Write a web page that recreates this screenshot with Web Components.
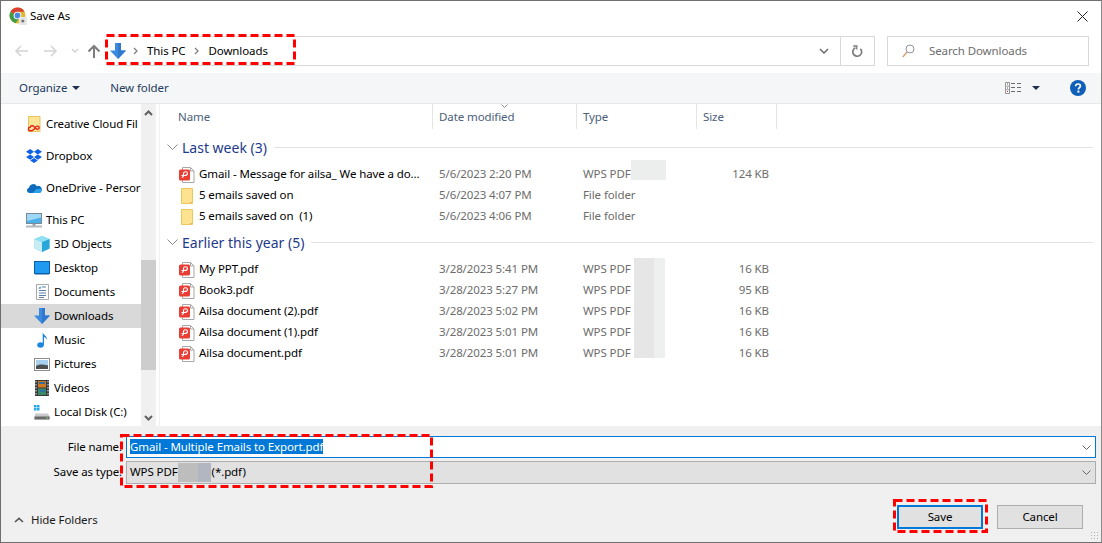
<!DOCTYPE html>
<html>
<head>
<meta charset="utf-8">
<title>Save As</title>
<style>
  html, body { margin: 0; padding: 0; background: #fff; }
  body { font-family: "Noto Sans", "Open Sans", sans-serif; font-size: 11.5px; letter-spacing: -0.1px; color: #000; }
</style>
</head>
<body>
<save-dialog></save-dialog>

<script>
const ICONS = {
  chrome: `<svg width="18" height="18" viewBox="0 0 18 18">
    <circle cx="8.5" cy="8.5" r="8" fill="#e0b92e"/>
    <path d="M1.6 4.5A8 8 0 0 1 15.6 4.8L8.5 4.8A4 4 0 0 0 4.8 7.2Z" fill="#d8412f"/>
    <path d="M1.6 4.5A8 8 0 0 0 6.4 16.2L9.6 11.9A4 4 0 0 1 4.8 7.2Z" fill="#3f9c4c"/>
    <circle cx="8.5" cy="8.5" r="3.8" fill="#fff"/><circle cx="8.5" cy="8.5" r="2.9" fill="#4a88e0"/>
    <rect x="10" y="10" width="8" height="8" rx="1" fill="#e6e6e6"/><circle cx="13.8" cy="14" r="1.6" fill="#777"/></svg>`,
  back: `<svg width="14" height="12" viewBox="0 0 14 12" fill="none" stroke="#d4d4d4" stroke-width="1.6"><path d="M14 6H2M7 1 2 6l5 5"/></svg>`,
  forward: `<svg width="14" height="12" viewBox="0 0 14 12" fill="none" stroke="#d4d4d4" stroke-width="1.6"><path d="M0 6h12M7 1l5 5-5 5"/></svg>`,
  recent: `<svg width="8" height="6" viewBox="0 0 8 6" fill="none" stroke="#d0d0d0" stroke-width="1.4"><path d="M1 1l3 3 3-3"/></svg>`,
  up: `<svg width="14" height="14" viewBox="0 0 14 14" fill="none" stroke="#7d7d7d" stroke-width="2"><path d="M7 14V2M1.500 7.500 7 2l5.500 5.500"/></svg>`,
  download: `<svg width="16" height="16" viewBox="0 0 16 16"><path d="M5 0h6v7.500h5L8 16 0 7.500h5Z" fill="#3a8ae0"/><path d="M8 0h3v7.500h5L8 16Z" fill="#2f79cf"/></svg>`,
  crumb: `<svg width="5" height="8" viewBox="0 0 5 8" fill="none" stroke="#808080" stroke-width="1.3"><path d="M1 1l3 3-3 3"/></svg>`,
  chevron: `<svg width="10" height="6" viewBox="0 0 10 6" fill="none" stroke="#6d6d6d" stroke-width="1.5"><path d="M1 1l4 4 4-4"/></svg>`,
  thin: `<svg width="9" height="5" viewBox="0 0 9 5" fill="none" stroke="#666" stroke-width="1"><path d="M.5.5l4 4 4-4"/></svg>`,
  group: `<svg width="11" height="6" viewBox="0 0 11 6" fill="none" stroke="#8a8a8a" stroke-width="1"><path d="M.5.5l5 5 5-5"/></svg>`,
  refresh: `<svg width="11" height="13" viewBox="0 0 11 13" fill="none" stroke="#7b7b7b" stroke-width="1.7"><path d="M3.500 2.800A4.400 4.400 0 1 0 8.400 3.800"/><path d="M1.200 1h3.600v3.600" stroke-width="1.3"/></svg>`,
  search: `<svg width="13" height="14" viewBox="0 0 13 14" fill="none"><circle cx="8" cy="5" r="4" stroke="#8d93a0"/><path d="M5 8 .8 13" stroke="#d89a68" stroke-width="1.2"/></svg>`,
  close: `<svg width="11" height="11" viewBox="0 0 11 11" stroke="#222" fill="none"><path d="M.5.5l10 10M10.500.5l-10 10"/></svg>`,
  views: `<svg width="17" height="12" viewBox="0 0 17 12" fill="none"><rect x=".5" y=".5" width="4" height="11" stroke="#9a9a9a" fill="#fff"/><path d="M.5 4.200h4M.5 7.800h4" stroke="#9a9a9a"/><path d="M6 1.500h4M12 1.500h4M6 5.500h4M12 5.500h4M6 9.500h4M12 9.500h4" stroke="#6b6b6b"/><path d="M2 2h1M2 6h1" stroke="#555"/><path d="M2 9.500h1" stroke="#c33"/></svg>`,
  caret: `<svg width="8" height="4" viewBox="0 0 8 4"><path d="M0 0h8L4 4Z" fill="#1e3050"/></svg>`,
  help: `<svg width="16" height="16" viewBox="0 0 16 16"><circle cx="8" cy="8" r="8" fill="#0f5fb8"/><path d="M5.600 6.200C5.700 4.600 6.700 4 8 4c1.400 0 2.400.8 2.400 2 0 1.700-2 1.700-2 3.400" fill="none" stroke="#fff" stroke-width="1.7"/><rect x="7.400" y="10.600" width="2" height="2" fill="#fff"/></svg>`,
  sortUp: `<svg width="7" height="4" viewBox="0 0 7 4" fill="none" stroke="#8a8a8a"><path d="M.5.5l3 3 3-3"/></svg>`,
  scrollUp: `<svg width="9" height="6" viewBox="0 0 9 6" fill="none" stroke="#606060" stroke-width="2"><path d="M1 5l3.500-3.500L8 5"/></svg>`,
  scrollDown: `<svg width="9" height="6" viewBox="0 0 9 6" fill="none" stroke="#606060" stroke-width="2"><path d="M1 1l3.500 3.500L8 1"/></svg>`,
  hide: `<svg width="10" height="6" viewBox="0 0 10 6" fill="none" stroke="#555" stroke-width="1.6"><path d="M1 5l4-3.600L9 5"/></svg>`,
  cloudfolder: `<svg width="14" height="16" viewBox="0 0 14 16"><path d="M1.500.5h11.500v15H1.500Z" fill="#fde597" stroke="#e6c45f"/><path d="M3.500 14.800c-3-.3-2.600-3.600-.3-3.600.5-1.700 2.600-1.900 3.700-.7l2.400 2.400c1.400 1 3.400-.2 2.700-1.900-.7-1.400-2.700-.9-3.400.2L6.800 13.600c-1 1-2.100 1.300-3.300 1.200Z" fill="none" stroke="#e0271e" stroke-width="1.4"/></svg>`,
  dropbox: `<svg width="16" height="14" viewBox="0 0 16 14" fill="#0f62e6"><path d="M4.200 0 0 2.700l4.200 2.700L8 2.700ZM11.800 0 8 2.700l3.800 2.700L16 2.700ZM0 8.100l4.200 2.700L8 8.100 4.200 5.400ZM11.800 5.400 8 8.100l3.800 2.700L16 8.100ZM4.200 11.600 8 14l3.800-2.400L8 9Z"/></svg>`,
  onedrive: `<svg width="16" height="10" viewBox="0 0 17 11"><path d="M3.500 11A3 3 0 0 1 3 5.100 4.600 4.600 0 0 1 11.600 3.600 3.800 3.800 0 0 1 17 8c0 1.800-1.300 3-3 3Z" fill="#0f6cbd"/><path d="M7 11 11 6.500 16.500 6.300C17.500 8.500 16 11 14 11Z" fill="#2aa0e8"/></svg>`,
  pc: `<svg width="16" height="15" viewBox="0 0 16 15"><rect x=".5" y=".5" width="15" height="10" fill="#4bb1e8" stroke="#7a8a96"/><path d="M1 1h14v3.500L1 8Z" fill="#9dd8f4"/><path d="M6.500 11h3v2h-3Z" fill="#9aa3aa"/><path d="M0 13.500h16" stroke="#b3b9bd" stroke-width="2"/></svg>`,
  cube: `<svg width="16" height="16" viewBox="0 0 16 16"><path d="M8 0 15.500 3V12.500L8 16 .5 12.500V3Z" fill="#6fd3ea"/><path d="M.5 3 8 6v10L.5 12.500Z" fill="#c6ecf4"/><path d="M8 6 15.500 3V12.500L8 16Z" fill="#2aa7d8"/><path d="M8 0 15.500 3 8 6 .5 3Z" fill="#8ee0f2"/></svg>`,
  desktop: `<svg width="16" height="14" viewBox="0 0 16 14"><rect x=".5" y=".5" width="15" height="12" fill="#1e9bf0" stroke="#0c5ea8"/><path d="M1 12h14v1.500H1Z" fill="#0c5ea8"/></svg>`,
  docs: `<svg width="13" height="16" viewBox="0 0 13 16"><path d="M.5.5h12v15H.5Z" fill="#fff" stroke="#a9a9a9"/><path d="M3 4h2M6 3h4M3 6.500h7M3 9h7M3 11.500h7M3 13.500h5" stroke="#5b7fa8"/><path d="M3 4.500 5 2.500" stroke="#2f8ad8"/></svg>`,
  music: `<svg width="11" height="16" viewBox="0 0 11 16"><ellipse cx="3.500" cy="13" rx="3.300" ry="2.700" fill="#1f86e0"/><path d="M5.700 13V0c.3 2.600 4.800 4 4.300 8.200C9.500 5.800 7.800 5.500 7 5v8Z" fill="#1f86e0"/></svg>`,
  pictures: `<svg width="16" height="13" viewBox="0 0 16 13"><rect x=".5" y=".5" width="15" height="12" fill="#fff" stroke="#8d8d8d"/><rect x="2" y="2" width="12" height="9" fill="#a7d0ee"/><path d="M2 8c3-2 6-2 12-.5V11H2Z" fill="#4c4f50"/></svg>`,
  videos: `<svg width="14" height="16" viewBox="0 0 14 16"><rect width="14" height="16" fill="#3a3a3a"/><rect x="3" y="1" width="8" height="6.500" fill="#d07a22"/><rect x="3" y="8.500" width="8" height="6.500" fill="#3a8a6a"/><path d="M4 3h6M5 11h5" stroke="#2f6fa8" stroke-width="2"/><path d="M1 1v14M13 1v14" stroke="#ccc" stroke-width="1.2" stroke-dasharray="1.500 1.500"/></svg>`,
  disk: `<svg width="16" height="15" viewBox="0 0 16 15"><path d="M0 0h2.500v2.500H0ZM3 0h2.500v2.500H3ZM0 3h2.500v2.500H0ZM3 3h2.500v2.500H3Z" fill="#1ea7f0"/><path d="M1.500 8.500h12.500l1.500 3v3H.5v-3Z" fill="#c9c9c9"/><rect x=".5" y="11.500" width="15" height="3" fill="#6a6a6a"/><rect x="12" y="12.500" width="2" height="1" fill="#7fd07f"/></svg>`,
  pdf: `<svg width="16" height="16" viewBox="0 0 16 16"><path d="M3.500.5h8l3.500 3.500v11.500H3.500Z" fill="#fff" stroke="#a8a8a8"/><path d="M11.500.5V4H15" fill="none" stroke="#a8a8a8"/><rect x="0" y="2.500" width="11" height="11" rx="1.500" fill="#ea3d34"/><path d="M2.500 8.500h2.800c2.500 0 3.200-1 3.200-2s-.8-1.700-2-1.700-2 .8-2 2v1.500c0 1.400-.5 2.200-1.700 2.200" fill="none" stroke="#fff" stroke-width="1.1"/></svg>`,
  folder: `<svg width="12" height="16" viewBox="0 0 12 16"><path d="M.5.5h11v15H.5Z" fill="#fde28f" stroke="#ecc75c"/><path d="M10 14v1" stroke="#b89a3c"/></svg>`
};

class WinIcon extends HTMLElement {
  static get observedAttributes() { return ["name"]; }
  constructor() {
    super();
    this.attachShadow({mode: "open"});
  }
  attributeChangedCallback() { this.render(); }
  render() {
    this.shadowRoot.innerHTML = `<style>
        :host { display: inline-flex; align-items: center; justify-content: center; flex: none; }
        svg { display: block; }
      </style>${ICONS[this.getAttribute("name")] || ""}`;
  }
}
customElements.define("win-icon", WinIcon);

class TitleBar extends HTMLElement {
  constructor() {
    super();
    this.attachShadow({mode: "open"}).innerHTML = `
      <style>
        :host { display: flex; align-items: center; height: 30px; padding: 0 12px 0 8px; background: #fff; }
        .title { margin: 0 0 2px 3px; color: #000; flex: 1; }
        .close { margin-right: 1px; }
      </style>
      <win-icon name="chrome"></win-icon>
      <span class="title"><slot></slot></span>
      <win-icon class="close" name="close"></win-icon>`;
  }
}
customElements.define("title-bar", TitleBar);

class NavBar extends HTMLElement {
  constructor() {
    super();
    this.attachShadow({mode: "open"}).innerHTML = `
      <style>
        :host { display: flex; align-items: center; height: 40px; padding: 0 12px 2px 13px; background: #fff; }
        .btns { display: flex; align-items: center; width: 95px; flex: none; }
        .btns win-icon:nth-child(1) { margin-right: 16px; }
        .btns win-icon:nth-child(2) { margin-right: 13px; }
        .btns win-icon:nth-child(3) { margin-right: 8px; }
        .address { display: flex; align-items: center; width: 768px; height: 30px; box-sizing: border-box; flex: none;
                   border: 1px solid #d9d9d9; border-left: 0; margin-left: -2px; }
        .address .dl { margin: 0 7px 0 3px; }
        .crumbs { display: flex; align-items: center; flex: 1; color: #000; }
        .crumbs span { margin: 0 8px 2px 9px; }
        .crumbs span + win-icon + span { margin-left: 10px; }
        .combo { width: 32px; display: flex; justify-content: center; }
        .refresh { width: 33px; height: 100%; border-left: 1px solid #d9d9d9; display: flex; align-items: center; justify-content: center; }
        .search { display: flex; align-items: center; height: 30px; box-sizing: border-box; width: 202px; margin-left: 12px; flex: none;
                  border: 1px solid #d9d9d9; color: #6d6d6d; padding-left: 14px; }
        .search win-icon { margin-right: 14px; }
        .search span { margin-bottom: 2px; }
      </style>
      <div class="btns">
        <win-icon name="back"></win-icon><win-icon name="forward"></win-icon><win-icon name="recent"></win-icon><win-icon name="up"></win-icon>
      </div>
      <div class="address">
        <win-icon class="dl" name="download"></win-icon>
        <div class="crumbs">
          <win-icon name="crumb"></win-icon><span>This PC</span>
          <win-icon name="crumb"></win-icon><span>Downloads</span>
        </div>
        <div class="combo"><win-icon name="chevron"></win-icon></div>
        <div class="refresh"><win-icon name="refresh"></win-icon></div>
      </div>
      <div class="search"><win-icon name="search"></win-icon><span>Search Downloads</span></div>`;
  }
}
customElements.define("nav-bar", NavBar);

class ToolBar extends HTMLElement {
  constructor() {
    super();
    this.attachShadow({mode: "open"}).innerHTML = `
      <style>
        :host { display: flex; align-items: center; height: 30px; padding: 0 15px 0 18px; background: #f5f6f7;
                border-bottom: 1px solid #e8e8e8; color: #1e3a5c; }
        .org { display: flex; align-items: center; gap: 5px; margin-right: 30px; }
        span { margin-bottom: 2px; }
        .spacer { flex: 1; }
        .views { display: flex; align-items: center; gap: 10px; margin-right: 30px; }
      </style>
      <div class="org"><span>Organize</span><win-icon name="caret"></win-icon></div>
      <span>New folder</span>
      <div class="spacer"></div>
      <div class="views"><win-icon name="views"></win-icon><win-icon name="caret"></win-icon></div>
      <win-icon name="help"></win-icon>`;
  }
}
customElements.define("tool-bar", ToolBar);

class NavItem extends HTMLElement {
  constructor() {
    super();
    this.attachShadow({mode: "open"}).innerHTML = `
      <style>
        :host { display: flex; align-items: center; height: 24px; padding-left: 31px; overflow: hidden; white-space: nowrap; color: #000; }
        :host([top]) { height: 32px; padding-left: 23px; }
        :host([pc]) { height: 24px; padding-left: 23px; margin-top: 4px; }
        :host([selected]) { background: #d9d9d9; }
        .ic { width: 20px; margin-right: 2px; display: flex; justify-content: center; flex: none; }
        slot { display: block; margin-bottom: 2px; }
      </style>
      <span class="ic"><win-icon></win-icon></span><slot></slot>`;
  }
  connectedCallback() {
    this.shadowRoot.querySelector("win-icon").setAttribute("name", this.getAttribute("icon"));
  }
}
customElements.define("nav-item", NavItem);

class SideNav extends HTMLElement {
  constructor() {
    super();
    this.attachShadow({mode: "open"}).innerHTML = `
      <style>
        :host { display: flex; width: 158px; flex: none; background: #fff; border-right: 1px solid #f0f0f0; }
        .list { width: 140px; flex: none; padding-top: 4px; overflow: hidden; }
        .scroll { width: 15px; background: #f0f0f0; display: flex; flex-direction: column; justify-content: space-between; align-items: center; position: relative; }
        .arrow { height: 17px; display: flex; align-items: center; justify-content: center; }
        .thumb { position: absolute; left: 0; top: 156px; width: 15px; height: 110px; background: #cdcdcd; }
      </style>
      <div class="list"><slot></slot></div>
      <div class="scroll">
        <div class="arrow"><win-icon name="scrollUp"></win-icon></div>
        <div class="thumb"></div>
        <div class="arrow"><win-icon name="scrollDown"></win-icon></div>
      </div>`;
  }
}
customElements.define("side-nav", SideNav);

class FileHeader extends HTMLElement {
  constructor() {
    super();
    this.attachShadow({mode: "open"}).innerHTML = `
      <style>
        :host { display: grid; grid-template-columns: 273px 144px 120px 80px; height: 25px; color: #4c607a; position: relative; }
        div { display: flex; align-items: center; padding-left: 6px; border-right: 1px solid #e5e5e5; }
        div:first-of-type { padding-left: 18px; }
        .sort { position: absolute; left: 341px; top: 0; }
      </style>
      <div>Name</div><div>Date modified</div><div>Type</div><div>Size</div>
      <win-icon class="sort" name="sortUp"></win-icon>`;
  }
}
customElements.define("file-header", FileHeader);

class FileGroup extends HTMLElement {
  constructor() {
    super();
    this.attachShadow({mode: "open"}).innerHTML = `
      <style>
        :host { display: block; }
        .head { display: flex; align-items: center; height: 22px; padding: 0 8px 0 7px; color: #1e3a8a; font-size: 14px; letter-spacing: 0; margin-bottom: 6px; }
        .head win-icon { margin: 0 4px 0 0; }
        .head i { flex: 1; height: 1px; background: #e2e2e2; margin-left: 7px; }
      </style>
      <div class="head"><win-icon name="group"></win-icon><span class="label"></span><i></i></div>
      <slot></slot>`;
  }
  connectedCallback() {
    this.shadowRoot.querySelector(".label").textContent = this.getAttribute("label");
  }
}
customElements.define("file-group", FileGroup);

class FileRow extends HTMLElement {
  constructor() {
    super();
    this.attachShadow({mode: "open"}).innerHTML = `
      <style>
        :host { display: grid; grid-template-columns: 279px 144px 120px 66px; height: 21px; align-items: center; color: #6d6d6d; white-space: nowrap; }
        .name { display: flex; align-items: center; color: #000; padding-left: 19px; }
        .name win-icon { width: 16px; margin-right: 4px; }
        .n { white-space: pre; margin-bottom: 2px; }
        .d, .t, .size { margin-bottom: 2px; }
        .size { text-align: right; }
      </style>
      <div class="name"><win-icon></win-icon><span class="n"></span></div>
      <div class="d"></div><div class="t"></div><div class="size"></div>`;
  }
  connectedCallback() {
    const r = this.shadowRoot;
    r.querySelector("win-icon").setAttribute("name", this.getAttribute("icon") || "pdf");
    r.querySelector(".n").textContent = this.getAttribute("name");
    r.querySelector(".d").textContent = this.getAttribute("date");
    r.querySelector(".t").textContent = this.getAttribute("type");
    r.querySelector(".size").textContent = this.getAttribute("size") || "";
  }
}
customElements.define("file-row", FileRow);

class SaveForm extends HTMLElement {
  constructor() {
    super();
    this.attachShadow({mode: "open"}).innerHTML = `
      <style>
        :host { display: flex; flex-direction: column; height: 116px; background: #f0f0f0; box-sizing: border-box; padding: 10px 5px 0 0; position: relative; }
        .field { display: grid; grid-template-columns: 121px 1fr; column-gap: 4px; align-items: center; }
        .field + .field { margin-top: 3px; }
        label { text-align: right; color: #000; margin-bottom: 2px; }
        .box { display: flex; align-items: center; height: 22px; box-sizing: border-box; padding: 0 4px 0 3px; white-space: nowrap; }
        .box .txt { margin-bottom: 2px; }
        .name { border: 1px solid #0078d7; background: #fff; }
        .name mark { background: #0078d7; color: #fff; line-height: 15px; display: inline-block; }
        .type { border: 1px solid #adadad; background: #e1e1e1; height: 23px; }
        .blur { display: inline-flex; width: 33px; height: 19px; margin: 0 1px 0 0; }
        .blur b:first-child { width: 20px; background: #bdbdbd; }
        .blur b:last-child { width: 13px; background: #b2b6c0; }
        .grow { flex: 1; }
        .foot { display: flex; align-items: center; margin-top: 21px; padding: 0 13px; }
        .hide { display: flex; align-items: center; gap: 7px; color: #1a1a1a; flex: 1; margin-top: 6px; }
        .hide span { margin-bottom: 2px; }
        button { font: inherit; letter-spacing: inherit; width: 86px; height: 24px; box-sizing: border-box; background: #e1e1e1; border: 1px solid #adadad; color: #000; padding: 0 0 2px; margin: 0; }
        button.primary { border: 2px solid #0078d7; margin-right: 14px; }
        .grip { position: absolute; right: 1px; bottom: 1px; width: 10px; height: 10px;
                background-image: radial-gradient(#b0b0b0 1px, transparent 1px); background-size: 3px 3px; }
      </style>
      <div class="field"><label>File name:</label>
        <div class="box name"><span class="grow txt"><mark>Gmail - Multiple Emails to Export.pdf</mark></span><win-icon name="thin"></win-icon></div></div>
      <div class="field"><label>Save as type:</label>
        <div class="box type"><span class="txt">WPS PDF</span><span class="blur"><b></b><b></b></span><span class="grow txt">(*.pdf)</span><win-icon name="thin"></win-icon></div></div>
      <div class="foot">
        <div class="hide"><win-icon name="hide"></win-icon><span>Hide Folders</span></div>
        <button class="primary">Save</button><button>Cancel</button>
      </div>
      <div class="grip"></div>`;
  }
}
customElements.define("save-form", SaveForm);

// red dashed annotation drawn over the dialog
class DashBox extends HTMLElement {
  connectedCallback() {
    const w = +this.getAttribute("w"), h = +this.getAttribute("h");
    this.attachShadow({mode: "open"}).innerHTML = `
      <style>
        :host { display: block; position: absolute; pointer-events: none; }
        svg { display: block; }
      </style>
      <svg width="${w}" height="${h}"><rect x="1.5" y="1.5" width="${w - 3}" height="${h - 3}" fill="none" stroke="#f00" stroke-width="3" stroke-dasharray="8 4"/></svg>`;
  }
}
customElements.define("dash-box", DashBox);

class SaveDialog extends HTMLElement {
  constructor() {
    super();
    const rows1 = [
      ["Gmail - Message for ailsa_ We have a do...", "5/6/2023 2:20 PM", "WPS PDF", "124 KB", "pdf"],
      ["5 emails saved on", "5/6/2023 4:07 PM", "File folder", "", "folder"],
      ["5 emails saved on  (1)", "5/6/2023 4:06 PM", "File folder", "", "folder"]
    ];
    const rows2 = [
      ["My PPT.pdf", "3/28/2023 5:41 PM", "WPS PDF", "16 KB"],
      ["Book3.pdf", "3/28/2023 5:27 PM", "WPS PDF", "95 KB"],
      ["Ailsa document (2).pdf", "3/28/2023 5:02 PM", "WPS PDF", "16 KB"],
      ["Ailsa document (1).pdf", "3/28/2023 5:01 PM", "WPS PDF", "16 KB"],
      ["Ailsa document.pdf", "3/28/2023 5:01 PM", "WPS PDF", "16 KB"]
    ];
    const row = r => `<file-row name="${r[0]}" date="${r[1]}" type="${r[2]}" size="${r[3]}" icon="${r[4] || "pdf"}"></file-row>`;
    const nav = [
      ["cloudfolder", "Creative Cloud Fil", "top"], ["dropbox", "Dropbox", "top"], ["onedrive", "OneDrive - Persor", "top"],
      ["pc", "This PC", "pc"], ["cube", "3D Objects"], ["desktop", "Desktop"], ["docs", "Documents"],
      ["download", "Downloads", "selected"], ["music", "Music"], ["pictures", "Pictures"], ["videos", "Videos"], ["disk", "Local Disk (C:)"]
    ];
    const navItem = n => `<nav-item icon="${n[0]}" ${n[2] || ""}>${n[1]}</nav-item>`;
    this.attachShadow({mode: "open"}).innerHTML = `
      <style>
        :host { display: flex; flex-direction: column; position: relative; width: 1102px; height: 543px; box-sizing: border-box;
                border: 1px solid #6f6f6f; border-right-color: #8a8a8a; background: #fff; overflow: hidden; }
        .main { display: flex; height: 322px; }
        .files { flex: 1; overflow: hidden; }
        .groups { padding-top: 7px; }
        .groups file-group + file-group { margin-top: 4px; }
        .mask { position: absolute; }
      </style>
      <title-bar>Save As</title-bar>
      <nav-bar></nav-bar>
      <tool-bar></tool-bar>
      <div class="main">
        <side-nav>${nav.map(navItem).join("")}</side-nav>
        <div class="files">
          <file-header></file-header>
          <div class="groups">
            <file-group label="Last week (3)">${rows1.map(row).join("")}</file-group>
            <file-group label="Earlier this year (5)">${rows2.map(row).join("")}</file-group>
          </div>
        </div>
      </div>
      <save-form></save-form>
      <div class="mask" style="left:630px;top:159px;width:35px;height:20px;background:#eceded"></div>
      <div class="mask" style="left:633px;top:257px;width:20px;height:100px;background:#e6e6e6"></div>
      <div class="mask" style="left:653px;top:257px;width:11px;height:100px;background:#eeefef"></div>
      <dash-box style="left:104px;top:33px" w="191" h="31"></dash-box>
      <dash-box style="left:119px;top:433px" w="313" h="54"></dash-box>
      <dash-box style="left:892px;top:498px" w="95" h="34"></dash-box>`;
  }
}
customElements.define("save-dialog", SaveDialog);
</script>
</body>
</html>
